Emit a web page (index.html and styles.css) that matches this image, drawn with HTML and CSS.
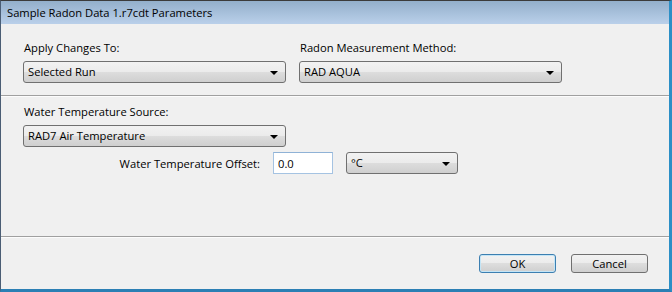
FILE: index.html
```html
<!DOCTYPE html>
<html>
<head>
<meta charset="UTF-8">
<title>Sample Radon Data 1.r7cdt Parameters</title>
<link rel="stylesheet" href="styles.css">
</head>
<body>
 <div id="wrap">
  <div id="titlebar">Sample Radon Data 1.r7cdt Parameters</div>
  <div id="content">
   <div class="section top">
    <div class="field">
     <label>Apply Changes To:</label>
     <div class="combo wide">Selected Run<span class="arrow"></span></div>
    </div>
    <div class="field">
     <label>Radon Measurement Method:</label>
     <div class="combo wide">RAD AQUA<span class="arrow"></span></div>
    </div>
   </div>
   <div class="sep"></div>
   <div class="section water">
    <div class="field">
     <label>Water Temperature Source:</label>
     <div class="combo wide">RAD7 Air Temperature<span class="arrow"></span></div>
    </div>
    <div class="offset_row">
     <label>Water Temperature Offset:</label>
     <input type="text" class="num" value="0.0">
     <div class="combo unit">°C<span class="arrow"></span></div>
    </div>
   </div>
   <div class="sep"></div>
   <div class="buttons">
    <button class="btn default">OK</button>
    <button class="btn">Cancel</button>
   </div>
  </div>
 </div>
</body>
</html>
```
FILE: styles.css
```css
html, body {
 margin: 0;
 padding: 0;
}

body {
 font-family: "Open Sans", "Noto Sans", sans-serif;
 font-size: 11.2px;
 color: #000;
 background: #fff;
}

#wrap {
 width: 672px;
 height: 292px;
 box-sizing: border-box;
 border-top: 1px solid #3b3b3b;
 border-left: 1px solid #4a5d74;
 border-right: 3px solid #2b8fc6;
 border-bottom: 3px solid #2b7fb4;
 background-color: #f0f0f0;
 display: flex;
 flex-direction: column;
}

#titlebar {
 height: 23px;
 line-height: 24px;
 padding-left: 6px;
 background: linear-gradient(#93afcb, #bad0ea);
}

#content {
 flex: 1;
 display: flex;
 flex-direction: column;
}

.section {
 display: flex;
}

.section.top {
 padding: 15px 0 12px 22px;
 gap: 13px;
}

.section.water {
 padding: 6px 0 0 22px;
 flex-direction: column;
 flex: 1;
}

.field label {
 display: block;
 height: 22px;
 line-height: 18px;
 padding-left: 1px;
}

.sep {
 height: 1px;
 background-color: #a0a0a0;
 border-bottom: 1px solid #fcfcfc;
}

.combo {
 position: relative;
 height: 20px;
 line-height: 20px;
 padding-left: 4px;
 border: 1px solid #707070;
 border-radius: 3px;
 background: linear-gradient(#f2f2f2 0%, #ebebeb 50%, #dddddd 50%, #cfcfcf 100%);
 box-sizing: content-box;
}

.combo.wide {
 width: 257px;
}

.combo.unit {
 width: 106px;
}

.arrow {
 position: absolute;
 right: 7px;
 top: 9px;
 width: 0;
 height: 0;
 border-left: 4px solid transparent;
 border-right: 4px solid transparent;
 border-top: 4px solid #000;
}

.offset_row {
 display: flex;
 align-items: center;
 margin-top: 5px;
}

.offset_row label {
 width: 250px;
 text-align: right;
 padding-right: 13px;
 box-sizing: border-box;
}

.num {
 width: 54px;
 height: 20px;
 padding: 0 0 0 4px;
 margin: 0 13px 0 0;
 border: 1px solid #a5c3e2;
 border-top-color: #8fb2d6;
 font-family: inherit;
 font-size: 11.2px;
 background: #fff;
}

.buttons {
 display: flex;
 justify-content: flex-end;
 gap: 15px;
 padding: 16px 21px 0 0;
 height: 51px;
 box-sizing: border-box;
}

.btn {
 width: 77px;
 height: 19px;
 padding: 0;
 font-family: inherit;
 font-size: 11.2px;
 border: 1px solid #707070;
 border-radius: 3px;
 background: linear-gradient(#f2f2f2 0%, #ebebeb 50%, #dddddd 50%, #cfcfcf 100%);
}

.btn.default {
 border-color: #3c7fb1;
 box-shadow: inset 0 0 0 1px #c4e5f6;
}
```
